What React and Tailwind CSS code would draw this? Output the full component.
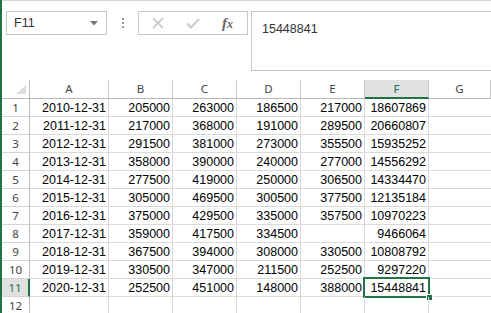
import React from 'react';

const rows = [
    ['2010-12-31', '205000', '263000', '186500', '217000', '18607869'],
    ['2011-12-31', '217000', '368000', '191000', '289500', '20660807'],
    ['2012-12-31', '291500', '381000', '273000', '355500', '15935252'],
    ['2013-12-31', '358000', '390000', '240000', '277000', '14556292'],
    ['2014-12-31', '277500', '419000', '250000', '306500', '14334470'],
    ['2015-12-31', '305000', '469500', '300500', '377500', '12135184'],
    ['2016-12-31', '375000', '429500', '335000', '357500', '10970223'],
    ['2017-12-31', '359000', '417500', '334500', '', '9466064'],
    ['2018-12-31', '367500', '394000', '308000', '330500', '10808792'],
    ['2019-12-31', '330500', '347000', '211500', '252500', '9297220'],
    ['2020-12-31', '252500', '451000', '148000', '388000', '15448841'],
    ['', '', '', '', '', '']
];

const columns = ['A', 'B', 'C', 'D', 'E', 'F', 'G'];

function App() {
    return (
        <div className="w-[491px] h-[313px] overflow-hidden bg-white border-l-2 border-[#217346] font-['Liberation_Sans',sans-serif]">
            {/* Formula bar */}
            <div className="h-[80px] border-t border-[#d4d4d4] flex items-start pt-[10px] pl-[4px] gap-0">
                <div className="w-[101px] h-[24px] border border-[#c6c6c6] flex items-center justify-between pl-[7px] pr-[8px]">
                    <span className="text-[12.5px] text-[#333]">F11</span>
                    <svg width="8" height="5" viewBox="0 0 8 5">
                        <path d="M0 0h8L4 4.5z" fill="#777" />
                    </svg>
                </div>
                <div className="w-[31px] h-[24px] flex flex-col items-center justify-center gap-[2px]">
                    <span className="w-[2px] h-[2px] bg-[#9a9a9a]" />
                    <span className="w-[2px] h-[2px] bg-[#9a9a9a]" />
                    <span className="w-[2px] h-[2px] bg-[#9a9a9a]" />
                </div>
                <div className="w-[110px] h-[24px] border border-[#c6c6c6] flex items-center">
                    <div className="w-[36px] flex justify-center pl-[2px]">
                        <svg width="12" height="12" viewBox="0 0 12 12">
                            <path d="M1 1l10 10M11 1L1 11" stroke="#c2c2c2" strokeWidth="1.6" />
                        </svg>
                    </div>
                    <div className="w-[36px] flex justify-center">
                        <svg width="14" height="11" viewBox="0 0 14 11">
                            <path d="M1 5.5l4 4L13 1" stroke="#c2c2c2" strokeWidth="1.8" fill="none" />
                        </svg>
                    </div>
                    <div className="flex-1 flex justify-center pr-[3px]">
                        <span className="font-['Liberation_Serif',serif] italic font-semibold text-[15px] text-[#666] leading-none">
                            f<span className="text-[12px]">x</span>
                        </span>
                    </div>
                </div>
                <div className="ml-[3px] flex-1 h-[60px] border border-[#c6c6c6] border-r-0 pl-[10px] pt-[4px]">
                    <span className="text-[12.5px] text-[#333]">15448841</span>
                </div>
            </div>

            {/* Grid */}
            <div className="grid grid-cols-[28px_79px_64px_64px_64px_64px_64px_1fr]">
                {/* Header row */}
                <div className="h-[19px] border-r border-b border-[#b8b8b8] relative">
                    <svg className="absolute right-[3px] bottom-[4px]" width="10" height="9" viewBox="0 0 10 9">
                        <path d="M10 0V9H0z" fill="#dcdcdc" />
                    </svg>
                </div>
                {columns.map((col) => (
                    <div
                        key={col}
                        className={
                            col === 'F'
                                ? "h-[19px] border-r border-[#c6c6c6] border-b-2 border-b-[#217346] bg-[#e1e1e1] text-[#217346] text-center font-['Noto_Sans',sans-serif] text-[11.5px] leading-[18px]"
                                : "h-[19px] border-r border-b border-[#c6c6c6] border-b-[#b8b8b8] text-[#444] text-center font-['Noto_Sans',sans-serif] text-[11.5px] leading-[18px]"
                        }
                    >
                        {col}
                    </div>
                ))}

                {/* Data rows */}
                {rows.map((row, i) => (
                    <React.Fragment key={i}>
                        <div
                            className={
                                i === 10
                                    ? "h-[18px] border-r-2 border-r-[#217346] border-b border-b-[#d4d4d4] bg-[#e1e1e1] text-[#217346] text-center font-['Noto_Sans',sans-serif] text-[11.5px] leading-[17px]"
                                    : "h-[18px] border-r border-r-[#b8b8b8] border-b border-b-[#d4d4d4] text-[#444] text-center font-['Noto_Sans',sans-serif] text-[11.5px] leading-[17px]"
                            }
                        >
                            {i + 1}
                        </div>
                        {row.map((cell, j) => (
                            <div
                                key={j}
                                className="h-[18px] border-r border-b border-[#dadada] text-right pr-[2px] text-[12.5px] leading-[18px] text-black relative"
                            >
                                {cell}
                                {i === 10 && j === 5 && (
                                    <>
                                        <div className="absolute -left-[2px] -top-[2px] w-[67px] h-[21px] border-2 border-[#217346] pointer-events-none" />
                                        <div className="absolute -right-[5px] -bottom-[5px] w-[7px] h-[7px] bg-[#217346] border border-white" />
                                    </>
                                )}
                            </div>
                        ))}
                        <div className="h-[18px] border-b border-[#dadada]" />
                    </React.Fragment>
                ))}
            </div>
        </div>
    );
}

export default App;
